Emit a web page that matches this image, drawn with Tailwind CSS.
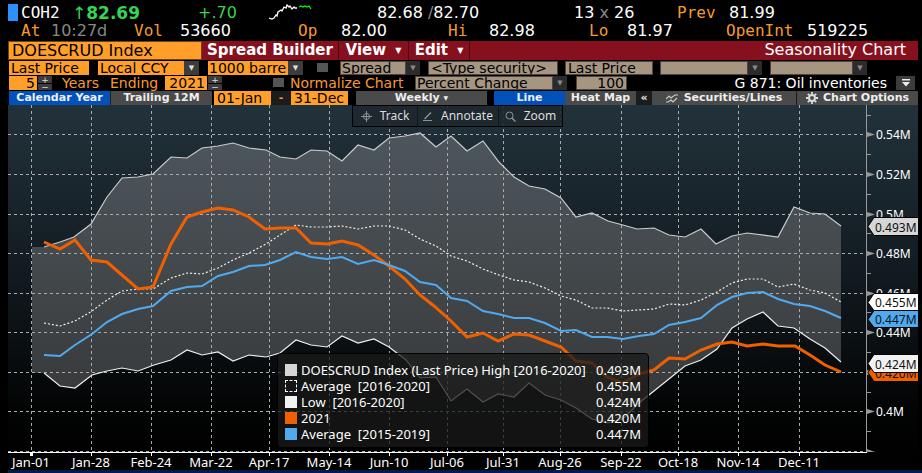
<!DOCTYPE html>
<html lang="en">

<head>
    <meta charset="UTF-8" />
    <meta name="viewport" content="width=device-width, initial-scale=1.0" />
    <title>COH2 - Seasonality Chart</title>
    <script src="https://cdn.jsdelivr.net/npm/@tailwindcss/browser@4"></script>
</head>

<body class="bg-black text-white font-['DejaVu_Sans',sans-serif] overflow-x-hidden">
    <!-- Quote header -->
    <header class="pl-2 pt-1 text-[16px] leading-[18px] whitespace-nowrap">
        <div class="grid grid-cols-[13fr_51fr_126fr_71fr_108fr_197fr_103fr_52fr_193fr] *:min-w-0">
            <span class="w-[10px] h-[17px] bg-[#2e8fff]"></span>
            <span class="font-['DejaVu_Sans_Mono',monospace]">COH2</span>
            <span class="font-bold text-[17px] text-[#35d455]"><span class="font-normal">↑</span>82.69</span>
            <span class="text-[#35d455]">+.70</span>
            <svg class="w-[43px] h-[18px]" viewBox="269 4 43 18" fill="none" stroke-width="1.3">
                <path stroke="#fff" d="M269 18l3 1 2-1 2-3 1 1 1-4 3-2 1 1 2-4 2 1 1-3 2 2 1-1 2 3 2-2 1 1h2" />
                <path stroke="#0f0" d="M299 7l2-1 2 1 2-1 2 1 2-1 2 3" />
            </svg>
            <span>82.68 <span class="text-[#888]">/</span>82.70</span>
            <span>13 <span class="text-[#888]">x</span> 26</span>
            <span class="font-['DejaVu_Sans_Mono',monospace] text-[#f79a2c]">Prev</span>
            <span>81.99</span>
        </div>
        <div class="grid grid-cols-[13fr_30fr_83fr_46fr_118fr_43fr_107fr_41fr_100fr_38fr_99fr_81fr_115fr] *:min-w-0">
            <span></span>
            <span class="font-['DejaVu_Sans_Mono',monospace] text-[#f79a2c]">At</span>
            <span class="text-[#888]">10:27d</span>
            <span class="font-['DejaVu_Sans_Mono',monospace] text-[#f79a2c]">Vol</span>
            <span>53660</span>
            <span class="font-['DejaVu_Sans_Mono',monospace] text-[#f79a2c]">Op</span>
            <span>82.00</span>
            <span class="font-['DejaVu_Sans_Mono',monospace] text-[#f79a2c]">Hi</span>
            <span>82.98</span>
            <span class="font-['DejaVu_Sans_Mono',monospace] text-[#f79a2c]">Lo</span>
            <span>81.97</span>
            <span class="font-['DejaVu_Sans_Mono',monospace] text-[#f79a2c]">OpenInt</span>
            <span>519225</span>
        </div>
    </header>

    <!-- Title bar -->
    <nav class="flex mt-px ml-2 mr-1 h-[19px] bg-[#86101e] text-[15px] leading-[17px] font-bold whitespace-nowrap">
        <input aria-label="Security" value="DOESCRUD Index" class="w-[194px] bg-[#ff9f2a] text-black text-[16px] font-normal border border-[#6b4512] px-[3px]" />
        <button class="w-[137px] border-r border-[#4a060f]">Spread Builder</button>
        <button class="w-[70px] border-r border-[#4a060f]">View <span class="text-[8px] align-middle ml-1">▼</span></button>
        <button class="w-[61px] border-r border-[#4a060f]">Edit <span class="text-[8px] align-middle ml-1">▼</span></button>
        <h1 class="ml-auto pr-3 text-[16px] font-normal">Seasonality Chart</h1>
    </nav>

    <!-- Settings -->
    <main class="ml-2 mr-1">
        <form class="pl-px text-[14px] leading-[14px] whitespace-nowrap text-black">
            <div class="flex mt-px h-[14px]">
                <input aria-label="Field" value="Last Price" class="w-20 bg-[#ff9f2a] px-[2px]" />
                <select aria-label="Currency" class="ml-[9px] w-[86px] appearance-none bg-[#ff9f2a] px-[2px]"><option>Local CCY</option></select>
                <span class="w-[15px] bg-[#3c3c3c] text-[#ddd] text-[7px] text-center">▼</span>
                <select aria-label="Units" class="ml-[9px] w-[80px] appearance-none bg-[#ff9f2a] px-px overflow-hidden"><option>1000 barre</option></select>
                <span class="w-[15px] bg-[#3c3c3c] text-[#ddd] text-[7px] text-center">▼</span>
                <input type="checkbox" aria-label="Use spread" class="appearance-none ml-[14px] mt-[2px] w-[11px] h-[9px] bg-[#555]" />
                <select aria-label="Spread" class="ml-3 w-[66px] appearance-none bg-[#a69580] border border-[#4e463c] px-px leading-3"><option>Spread</option></select>
                <span class="w-[14px] bg-[#2b2b2b] text-[#888] text-[7px] text-center">▼</span>
                <input aria-label="Spread security" value="&lt;Type security&gt;" class="ml-2 w-[130px] bg-[#a69580] border border-[#4e463c] px-[2px]" />
                <input aria-label="Spread field" value="Last Price" class="ml-[7px] w-[88px] bg-[#a69580] border border-[#4e463c] px-[2px]" />
                <select aria-label="Spread currency" class="ml-[7px] w-[88px] appearance-none bg-[#a69580] border border-[#4e463c]"><option></option></select>
                <span class="w-[14px] bg-[#2b2b2b] text-[#888] text-[7px] text-center">▼</span>
                <select aria-label="Spread units" class="ml-[8px] w-[83px] appearance-none bg-[#a69580] border border-[#4e463c]"><option></option></select>
                <span class="w-[14px] bg-[#2b2b2b] text-[#888] text-[7px] text-center">▼</span>
            </div>
            <div class="flex mt-px h-[14px]">
                <input id="years" value="5" class="w-7 bg-[#ff9f2a] px-[2px] text-right" />
                <span class="ml-px w-[14px] flex flex-col gap-px text-[#ddd] text-[9px] leading-[6px]">
                    <button type="button" class="h-[7px] bg-[#3c3c3c]">+</button>
                    <button type="button" class="h-[6px] bg-[#3c3c3c]">−</button>
                </span>
                <label for="years" class="ml-[10px] w-12 text-[#f79a2c]">Years</label>
                <label for="ending" class="w-[55px] text-[#f79a2c]">Ending</label>
                <input id="ending" value="2021" class="w-[42px] bg-[#ff9f2a] px-[2px] text-right" />
                <span class="ml-px w-[14px] flex flex-col gap-px text-[#ddd] text-[9px] leading-[6px]">
                    <button type="button" class="h-[7px] bg-[#3c3c3c]">+</button>
                    <button type="button" class="h-[6px] bg-[#3c3c3c]">−</button>
                </span>
                <input type="checkbox" id="normalize" class="appearance-none ml-[51px] mt-[2px] w-[11px] h-[9px] bg-[#555]" />
                <label for="normalize" class="ml-[6px] w-[125px] text-[#f79a2c]">Normalize Chart</label>
                <select aria-label="Normalize method" class="w-[138px] appearance-none bg-[#a69580] border border-[#4e463c] px-px leading-3"><option>Percent Change</option></select>
                <span class="w-[14px] bg-[#2b2b2b] text-[#888] text-[7px] text-center">▼</span>
                <input aria-label="Normalize base" value="100" class="ml-[9px] w-[51px] bg-[#a69580] border border-[#4e463c] px-[2px] text-right" />
                <span class="ml-auto text-white">G 871: Oil inventories</span>
                <button type="button" aria-label="More" class="ml-[9px] mr-[3px] w-[19px] bg-[#3c3c3c] flex items-center justify-center">
                    <svg class="w-[10px] h-2" viewBox="0 0 10 8" fill="#eee"><path d="M1 0h8v1.5H1zM1 3h8L5 7.500z" /></svg>
                </button>
            </div>
            <div class="flex mt-px h-[14px] text-[11px] leading-[14px] font-bold text-[#eee]">
                <button type="button" class="w-[101px] bg-[#0052ba]">Calendar Year</button>
                <button type="button" class="w-[102px] bg-[#4a4a4a] border-l border-[#222]">Trailing 12M</button>
                <input aria-label="From" value="01-Jan" class="ml-[2px] w-[57px] bg-[#ff9f2a] text-black text-[14px] font-normal px-[3px]" />
                <span class="w-[20px] bg-[#1c1c1c] text-[#f79a2c] text-center">-</span>
                <input aria-label="To" value="31-Dec" class="w-[57px] bg-[#ff9f2a] text-black text-[14px] font-normal px-[3px]" />
                <button type="button" class="ml-2 w-[131px] bg-[#4a4a4a]">Weekly <span class="text-[6px] align-middle">▼</span></button>
                <button type="button" class="ml-[7px] w-[71px] bg-[#0052ba]">Line</button>
                <button type="button" class="w-[71px] bg-[#4a4a4a]">Heat Map</button>
                <button type="button" class="w-[16px] bg-[#1c1c1c]">«</button>
                <button type="button" class="flex-1 flex items-center justify-center gap-[6px] bg-[#4a4a4a] border-r border-[#1c1c1c]">
                    <svg class="w-3 h-[9px]" viewBox="0 0 12 9" fill="none" stroke="#ccc" stroke-width="1.2"><path d="M0 5l3-3 2 2 4-3h3M0 8h2l3-2 2 2 4-4" /></svg>
                    Securities/Lines
                </button>
                <button type="button" class="w-[121px] flex items-center justify-center gap-[5px] bg-[#4a4a4a]">
                    <svg class="size-3" viewBox="0 0 12 12" fill="none" stroke="#ddd"><circle cx="6" cy="6" r="3" stroke-width="2" /><path stroke-width="1.800" d="M6 0v2M6 10v2M0 6h2M10 6h2M1.800 1.800l1.400 1.400M8.800 8.800l1.400 1.400M1.800 10.200l1.400-1.400M8.800 3.200l1.400-1.400" /></svg>
                    Chart Options
                </button>
            </div>
        </form>

        <!-- Chart -->
        <section class="relative font-['Noto_Sans',sans-serif] text-[12px]">
            <svg class="block w-full" viewBox="8 105 910 365" fill="none">
                <defs>
                    <linearGradient id="bg" x1="0" y1="0" x2="0" y2="1">
                        <stop offset="0" stop-color="#22323b" />
                        <stop offset="0.450" stop-color="#121b21" />
                        <stop offset="0.850" stop-color="#020303" />
                        <stop offset="1" stop-color="#000" />
                    </linearGradient>
                    <linearGradient id="band" gradientUnits="userSpaceOnUse" x1="0" y1="133" x2="0" y2="423">
                        <stop offset="0" stop-color="#4d565d" />
                        <stop offset="0.500" stop-color="#42474a" />
                        <stop offset="1" stop-color="#363738" />
                    </linearGradient>
                </defs>
                <rect x="8" y="105" width="910" height="365" fill="url(#bg)" />

                <!-- high/low range -->
                <path fill="url(#band)" d="M32 247L44 247 60 242 74 237 91 224 107 197 122 178 138 177 153 174 171 157 187 158 202 148 218 146 233 143 249 148 266 150 280 157 296 159 311 150 327 151 342 161 358 145 374 150 389 138 405 136 420 133 436 147 451 136 467 151 483 141 499 162 514 177 529 186 545 189 561 198 576 217 592 213 608 221 623 225 637 229 654 228 669 235 685 237 701 229 716 244 732 236 747 233 778 237 794 207 810 213 825 214 841 226 841 362 825 348 810 339 794 328 778 326 763 312 747 319 732 328 717 349 701 360 685 366 654 391 639 403 623 419 608 423 592 419 576 408 561 400 545 395 529 383 514 397 498 394 483 402 467 389 451 401 436 377 420 378 406 360 389 347 374 339 358 343 342 336 327 347 311 345 296 340 280 353 266 357 249 355 233 361 218 352 202 355 187 350 171 360 154 365 138 371 122 368 107 371 92 375 75 388 60 386 44 373 32 373z" />

                <!-- grid -->
                <path stroke="#a8aaab" stroke-dasharray="3 3" d="M8 134.500H866M8 174.500H866M8 214.500H866M8 253.500H866M8 293.500H866M8 332.500H866M8 372.500H866M8 411.500H866M8 451.500H866M31.500 105V452M91.500 105V452M151.500 105V452M211.500 105V452M269.500 105V452M329.500 105V452M389.500 105V452M447.500 105V452M503.500 105V452M560.500 105V452M621.500 105V452M678.500 105V452M738.500 105V452M799.500 105V452" />

                <!-- series -->
                <polyline stroke="#c9cbcc" stroke-width="1.200" points="44,247 60,242 74,237 91,224 107,197 122,178 138,177 153,174 171,157 187,158 202,148 218,146 233,143 249,148 266,150 280,157 296,159 311,150 327,151 342,161 358,145 374,150 389,138 405,136 420,133 436,147 451,136 467,151 483,141 499,162 514,177 529,186 545,189 561,198 576,217 592,213 608,221 623,225 637,229 654,228 669,235 685,237 701,229 716,244 732,236 747,233 778,237 794,207 810,213 825,214 841,226" />
                <polyline stroke="#eee" stroke-width="1.200" stroke-dasharray="2 2" points="44,323 60,326 75,321 92,311 107,300 122,291 138,289 153,289 171,278 187,273 202,274 218,268 233,260 249,253 266,244 280,235 296,225 311,227 327,227 342,226 358,229 374,226 389,226 405,230 420,239 436,246 451,256 467,261 483,269 499,275 514,280 529,282 545,288 561,296 576,300 592,308 607,308 623,311 654,309 669,304 685,305 701,300 717,292 732,283 747,279 763,279 778,287 794,284 810,290 825,293 841,302" />
                <polyline stroke="#eee" stroke-width="1.200" points="44,373 60,386 75,388 92,375 107,371 122,368 138,371 154,365 171,360 187,350 202,355 218,352 233,361 249,355 266,357 280,353 296,340 311,345 327,347 342,336 358,343 374,339 389,347 406,360 420,378 436,377 451,401 467,389 483,402 498,394 514,397 529,383 545,395 561,400 576,408 592,419 608,423 623,419 639,403 654,391 685,366 701,360 717,349 732,328 747,319 763,312 778,326 794,328 810,339 825,348 841,362" />
                <polyline stroke="#f06000" stroke-width="3" points="44,242 60,249 75,240 91,260 107,262 138,289 153,287 171,244 187,217 202,212 218,208 233,210 249,217 265,229 280,228 296,228 311,243 327,244 342,241 358,245 374,255 389,266 405,279 420,295 434,306 451,321 467,337 483,333 498,341 514,334 529,335 545,341 561,347 576,361 592,363 607,377 623,383 639,374 654,370 669,358 685,359 701,350 717,344 732,342 747,346 763,344 778,346 795,346 810,355 825,365 841,372" />
                <polyline stroke="#50aaf0" stroke-width="2" points="44,355 60,356 75,345 92,334 107,322 122,314 138,309 153,306 171,291 187,287 202,286 218,276 233,272 249,266 265,265 280,260 296,252 311,257 327,259 342,257 358,264 374,260 389,265 405,271 420,282 436,285 451,298 467,301 483,311 498,314 514,318 529,318 545,323 561,331 576,330 592,337 607,337 623,339 639,336 654,334 669,325 685,322 701,318 717,305 732,297 747,293 763,292 778,299 794,304 810,306 825,311 841,318" />

                <!-- axes -->
                <path stroke="#999" d="M866.500 105V452M867 115.500h4M867 154.500h4M867 194.500h4M867 233.500h4M867 273.500h4M867 312.500h4M867 352.500h4M867 392.500h4M867 431.500h4" />
                <path fill="#999" d="M867 132l8 2.500-8 2.500zM867 172l8 2.500-8 2.500zM867 212l8 2.500-8 2.500zM867 251l8 2.500-8 2.500zM867 291l8 2.500-8 2.500zM867 330l8 2.500-8 2.500zM867 370l8 2.500-8 2.500zM867 409l8 2.500-8 2.500zM867 449l8 3h-8z" />
                <path stroke="#fff" d="M8 452.500H867M91.500 453v3M151.500 453v3M211.500 453v3M269.500 453v3M329.500 453v3M389.500 453v3M447.500 453v3M503.500 453v3M560.500 453v3M621.500 453v3M678.500 453v3M738.500 453v3M799.500 453v3" />
                <rect x="30" y="453" width="3" height="3" fill="#fff" />
                <g fill="#fff" font-size="12">
                    <text x="876" y="139">0.54M</text>
                    <text x="876" y="179">0.52M</text>
                    <text x="876" y="219">0.5M</text>
                    <text x="876" y="258">0.48M</text>
                    <text x="876" y="298">0.46M</text>
                    <text x="876" y="337">0.44M</text>
                    <text x="876" y="416">0.4M</text>
                </g>
                <g fill="#fff" font-size="13" text-anchor="middle">
                    <text x="31" y="467">Jan-01</text>
                    <text x="91" y="467">Jan-28</text>
                    <text x="151" y="467">Feb-24</text>
                    <text x="211" y="467">Mar-22</text>
                    <text x="269" y="467">Apr-17</text>
                    <text x="329" y="467">May-14</text>
                    <text x="389" y="467">Jun-10</text>
                    <text x="447" y="467">Jul-06</text>
                    <text x="503" y="467">Jul-31</text>
                    <text x="560" y="467">Aug-26</text>
                    <text x="621" y="467">Sep-22</text>
                    <text x="678" y="467">Oct-18</text>
                    <text x="738" y="467">Nov-14</text>
                    <text x="799" y="467">Dec-11</text>
                </g>

                <!-- last value tags -->
                <g stroke="#000">
                    <path fill="#d6d6d6" d="M868 226.500l6-9h45v18h-45z" />
                    <path fill="#50aaf0" d="M868 319.500l6-9h45v17h-45z" />
                    <path fill="#fff" d="M868 302.500l6-9h45v17h-45z" />
                    <path fill="#f06000" d="M868 372.500l6-9h45v18h-45z" />
                </g>
                <g fill="#111" font-size="12">
                    <text x="875" y="232">0.493M</text>
                    <text x="875" y="307">0.455M</text>
                    <text x="875" y="324">0.447M</text>
                    <text x="875" y="378">0.420M</text>
                    <path fill="#f2f2f2" stroke="#000" d="M868 363.500l6-9h45v18h-45z" />
                    <text x="875" y="369">0.424M</text>
                </g>
            </svg>

            <!-- chart tools -->
            <div class="absolute left-[344px] top-0 h-[22px] flex border border-black bg-[#1d282f]/90 text-[#ddd] text-[12px] leading-5">
                <button class="w-[64px] flex items-center justify-center gap-2">
                    <svg class="size-[11px]" viewBox="0 0 11 11" fill="none" stroke="#8b9296"><circle cx="5.500" cy="5.500" r="3" /><path d="M5.500 0v11M0 5.500h11" /></svg>
                    Track
                </button>
                <button class="w-[82px] flex items-center justify-center gap-2 border-x border-[#10171b]">
                    <svg class="w-[10px] h-[11px]" viewBox="0 0 10 11" fill="none" stroke="#8b9296"><path stroke-width="1.500" d="M1.500 8L8 1.500" /><path d="M0 9.500h9" /></svg>
                    Annotate
                </button>
                <button class="w-[63px] flex items-center justify-center gap-2">
                    <svg class="size-[11px]" viewBox="0 0 11 11" fill="none" stroke="#8b9296"><circle cx="4.500" cy="4.500" r="3.500" /><path stroke-width="1.500" d="M7 7l3.500 3.500" /></svg>
                    Zoom
                </button>
            </div>

            <!-- legend -->
            <ul class="absolute left-[269px] top-[248px] w-[372px] px-[7px] pt-2 pb-[5px] rounded border border-black bg-[#191919]/75 text-[13px] leading-4 whitespace-nowrap">
                <li class="flex items-center"><i class="size-3 mr-1 bg-[#d6d6d6]"></i>DOESCRUD Index (Last Price) High [2016-2020]<span class="ml-auto">0.493M</span></li>
                <li class="flex items-center"><i class="size-3 mr-1 border border-dashed border-white"></i>Average &nbsp;[2016-2020]<span class="ml-auto">0.455M</span></li>
                <li class="flex items-center"><i class="size-3 mr-1 bg-[#f2f2f2]"></i>Low &nbsp;[2016-2020]<span class="ml-auto">0.424M</span></li>
                <li class="flex items-center"><i class="size-3 mr-1 bg-[#f06000]"></i>2021<span class="ml-auto">0.420M</span></li>
                <li class="flex items-center"><i class="size-3 mr-1 bg-[#50aaf0]"></i>Average &nbsp;[2015-2019]<span class="ml-auto">0.447M</span></li>
            </ul>
        </section>
    </main>
    <footer class="h-[3px] ml-2 bg-[#001c4c]"></footer>
</body>

</html>
